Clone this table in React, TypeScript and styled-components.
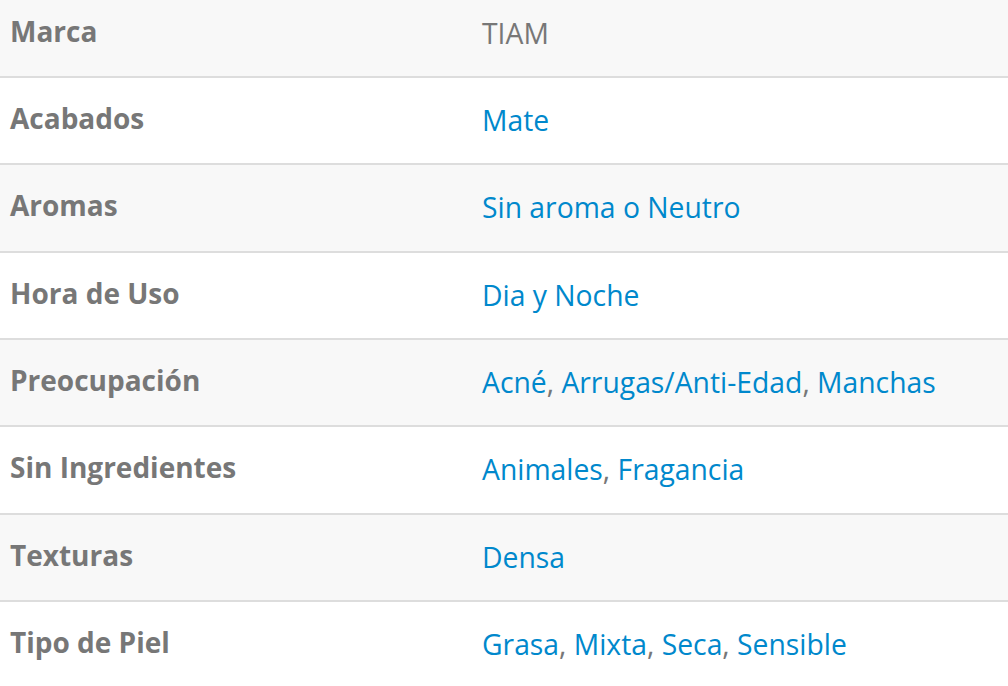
import React from "react";
import styled, { createGlobalStyle } from "styled-components";

const Global = createGlobalStyle`
  html, body { margin: 0; padding: 0; background: #fff; }
  body { font-family: "Open Sans", "Noto Sans", sans-serif; }
`;

const Table = styled.div`
  display: flex;
  flex-direction: column;
  margin-top: -9.33px;
  width: 1008px;
`;

const Row = styled.div<{ $odd: boolean }>`
  display: grid;
  grid-template-columns: 473px 1fr;
  box-sizing: border-box;
  height: 87.33px;
  padding-top: 19px;
  background: ${(p) => (p.$odd ? "#f8f8f8" : "#ffffff")};
  border-bottom: 2px solid #dddddd;
  font-size: 28px;
  line-height: 42px;
`;

const Label = styled.div`
  padding-left: 10px;
  font-weight: 700;
  color: #777777;
`;

const Value = styled.div`
  padding-left: 9px;
  padding-top: 2px;
  font-size: 28.3px;
  color: #777777;
`;

const Link = styled.a`
  color: #0088cc;
  text-decoration: none;
`;

type Item = { label: string; values: string[]; plain?: boolean };

const items: Item[] = [
  { label: "Marca", values: ["TIAM"], plain: true },
  { label: "Acabados", values: ["Mate"] },
  { label: "Aromas", values: ["Sin aroma o Neutro"] },
  { label: "Hora de Uso", values: ["Dia y Noche"] },
  { label: "Preocupación", values: ["Acné", "Arrugas/Anti-Edad", "Manchas"] },
  { label: "Sin Ingredientes", values: ["Animales", "Fragancia"] },
  { label: "Texturas", values: ["Densa"] },
  { label: "Tipo de Piel", values: ["Grasa", "Mixta", "Seca", "Sensible"] },
];

export default function App() {
  return (
    <>
      <Global />
      <Table>
        {items.map((it, i) => (
          <Row key={it.label} $odd={i % 2 === 0}>
            <Label>{it.label}</Label>
            <Value>
              {it.plain
                ? it.values[0]
                : it.values.map((v, j) => (
                    <React.Fragment key={v}>
                      {j > 0 && ", "}
                      <Link href="#">{v}</Link>
                    </React.Fragment>
                  ))}
            </Value>
          </Row>
        ))}
      </Table>
    </>
  );
}
